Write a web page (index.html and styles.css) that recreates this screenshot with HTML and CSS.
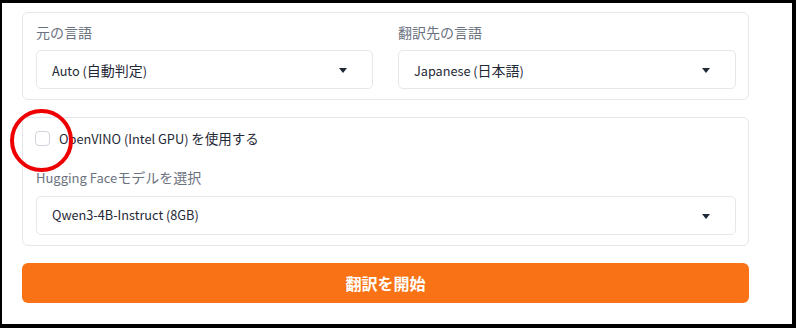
FILE: index.html
```html
<!DOCTYPE html>
<html lang="ja">
<head>
<meta charset="utf-8">
<link rel="stylesheet" href="styles.css">
</head>
<body>
<div class="frame">
  <div class="page">
    <section class="card lang-card">
      <div class="field">
        <div class="label">元の言語</div>
        <div class="select"><span><span class="lat">Auto (</span>自動判定<span class="lat">)</span></span><span class="caret"></span></div>
      </div>
      <div class="field">
        <div class="label">翻訳先の言語</div>
        <div class="select"><span><span class="lat">Japanese (</span>日本語<span class="lat">)</span></span><span class="caret"></span></div>
      </div>
    </section>
    <section class="card model-card">
      <label class="check-row">
        <span class="checkbox"></span>
        <span class="check-text"><span class="lat">OpenVINO (Intel GPU) </span>を使用する</span>
      </label>
      <div class="field">
        <div class="label"><span class="lat">Hugging Face</span>モデルを選択</div>
        <div class="select"><span class="lat">Qwen3-4B-Instruct (8GB)</span><span class="caret"></span></div>
      </div>
      <span class="annotation"></span>
    </section>
    <button class="primary">翻訳を開始</button>
  </div>
</div>
</body>
</html>
```
FILE: styles.css
```css
html, body {
  margin: 0;
  padding: 0;
  background: #000;
}
body {
  width: 796px;
  height: 328px;
  padding: 3px 4px 4px 2px;
  box-sizing: border-box;
  font-family: "Noto Sans CJK JP", "Noto Sans", sans-serif;
  font-size: 14px;
  color: #1f2937;
}
.lat {
  font-size: 12.7px;
  line-height: 1;
}
.frame {
  background: #fff;
  height: 321px;
  width: 790px;
}
.page {
  padding: 9px 43px 0 20px;
  display: flex;
  flex-direction: column;
}
.card {
  border: 1px solid #e5e7eb;
  border-radius: 6px;
  background: #fff;
}
.lang-card {
  display: grid;
  grid-template-columns: 337px 338px;
  column-gap: 25px;
  padding: 9px 12px 10px 13px;
}
.field {
  display: flex;
  flex-direction: column;
  gap: 8px;
}
.label {
  color: #6b7280;
  line-height: 20px;
  height: 20px;
  font-size: 14px;
}
.label .lat {
  font-size: 13px;
}
.select {
  height: 39px;
  box-sizing: border-box;
  border: 1px solid #e5e7eb;
  border-radius: 5px;
  display: flex;
  align-items: center;
  justify-content: space-between;
  padding: 0 25px 0 15px;
  line-height: 20px;
  color: #1f2937;
}
.caret {
  width: 0;
  height: 0;
  border-left: 4px solid transparent;
  border-right: 4px solid transparent;
  border-top: 5px solid #1f2937;
  margin-top: 1px;
}
.model-card {
  position: relative;
  margin-top: 17px;
  padding: 10px 12px 10px 13px;
  display: flex;
  flex-direction: column;
  gap: 19px;
}
.model-card .field {
  gap: 9px;
}
.check-row {
  display: flex;
  align-items: center;
  gap: 9px;
  line-height: 20px;
  height: 20px;
}
.checkbox {
  width: 15px;
  height: 15px;
  box-sizing: border-box;
  border: 1px solid #d1d5db;
  border-radius: 4px;
  margin-left: -1px;
  background: #fff;
}
.check-text {
  color: #1f2937;
  font-size: 13.5px;
}
.check-text .lat {
  font-size: 12.8px;
}
.annotation {
  position: absolute;
  left: -13px;
  top: -9px;
  width: 63px;
  height: 63px;
  box-sizing: border-box;
  border: 4px solid #ee0000;
  border-radius: 50%;
  pointer-events: none;
}
.primary {
  margin-top: 17px;
  height: 40px;
  border: none;
  border-radius: 6px;
  background: #f97316;
  color: #fff;
  font-family: "Noto Sans CJK JP", "Noto Sans", sans-serif;
  font-size: 16px;
  font-weight: 700;
  padding: 0;
}
```
